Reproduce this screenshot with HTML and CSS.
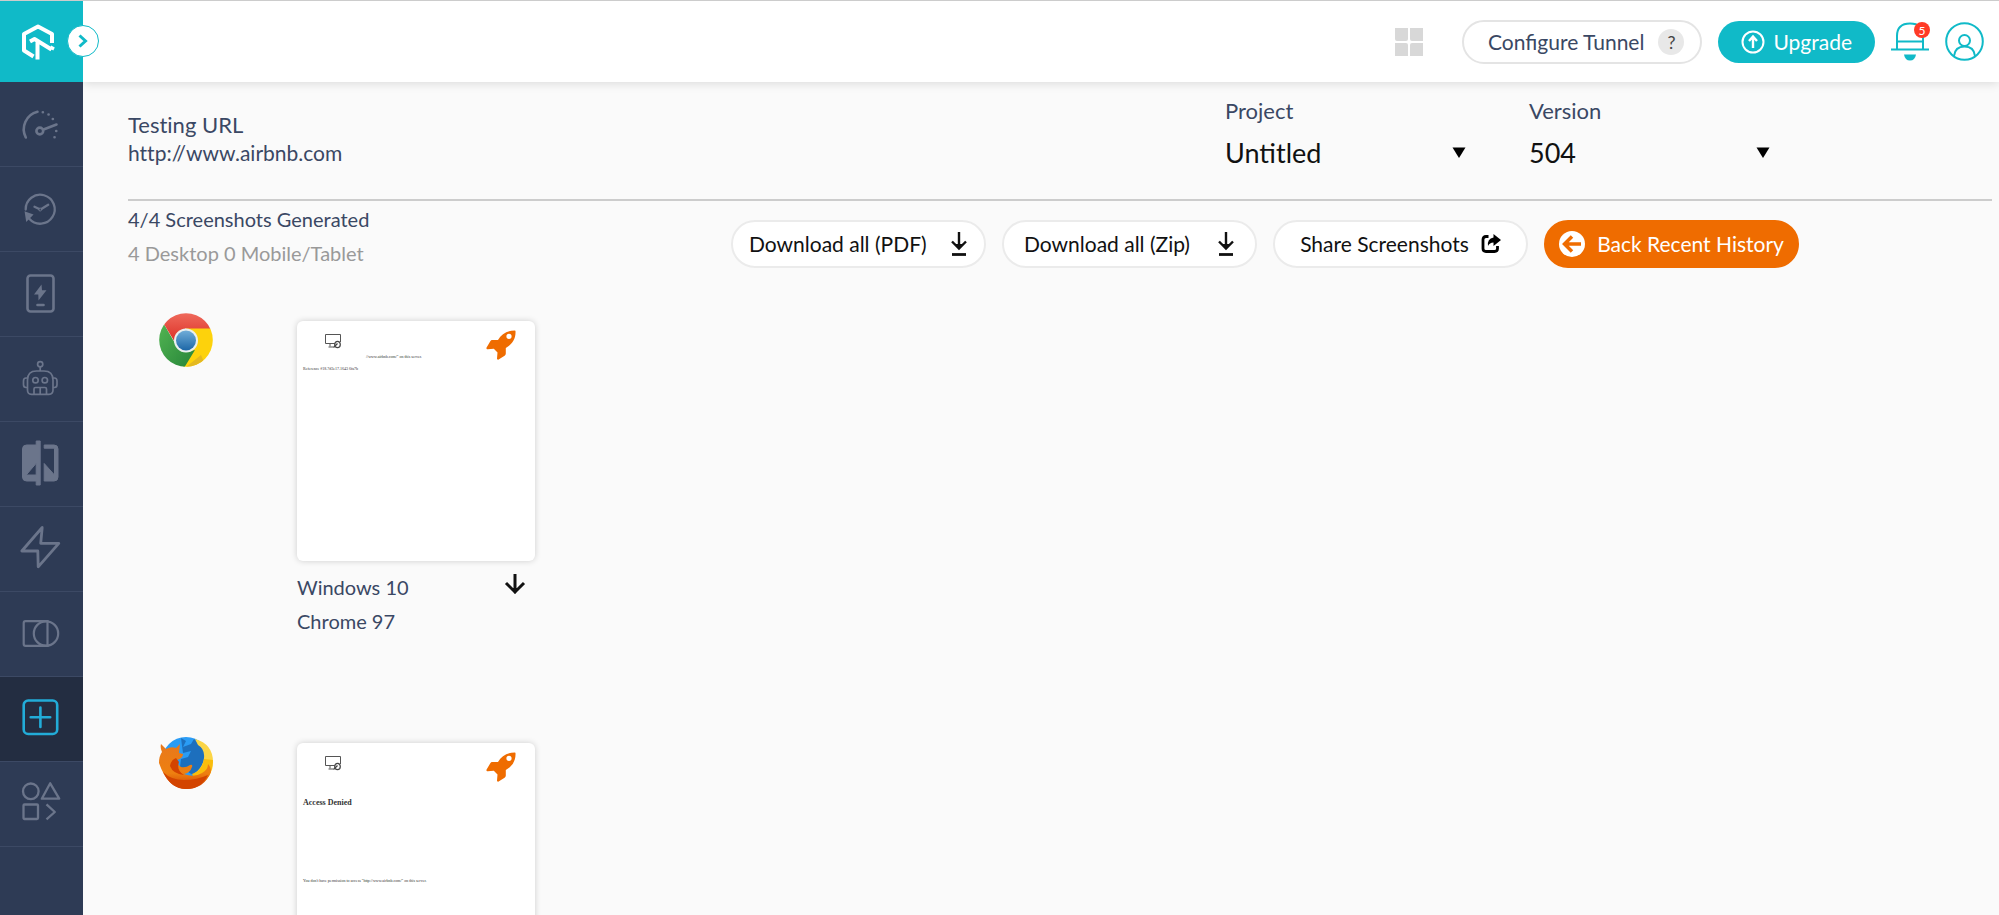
FILE: index.html
```
<!DOCTYPE html>
<html lang="en">
<head>
    <meta charset="UTF-8">
    <meta name="viewport" content="width=device-width, initial-scale=1.0">
    <title>Screenshot Results</title>
    <link rel="stylesheet" href="styles.css">
</head>
<body>
    <svg class="symbols" aria-hidden="true">
        <symbol id="icon-download" viewBox="0 0 18 26">
            <path d="M9 1v17M2 10.5l7 7 7-7" fill="none" stroke="currentColor" stroke-width="2.4"/>
            <path d="M4.5 13h9L9 18z" fill="currentColor"/>
            <path d="M2 23.5h14" stroke="currentColor" stroke-width="2.8"/>
        </symbol>
        <symbol id="icon-monitor" viewBox="0 0 18 16">
            <path d="M11 10.500H1.500V1.500h15V9M6 10.500v3M4.500 14h5" fill="none" stroke="#555" stroke-width="1"/>
            <ellipse cx="13.500" cy="11.500" rx="2.800" ry="3.200" fill="#fff" stroke="#444" stroke-width="1.200"/>
            <path d="M9.500 14.500l4-4" stroke="#444" stroke-width="1.200"/>
        </symbol>
        <symbol id="icon-rocket" viewBox="0 0 30 30">
            <path fill="#ef6c00" fill-rule="evenodd" d="M29 .5C21 .5 15.500 4 12 10H6.500c-1 0-1.700.5-2.200 1.300L.6 17.600c-.5 1 .2 1.700 1.200 1.600l6-.4L11.500 22.500 11 28.500c0 1 .8 1.500 1.600 1l6-3.800c.8-.5 1.200-1.200 1.200-2.200V18C26 14.500 30 9 29.500 1zM23 3.700a2.600 2.600 0 1 1 0 5.200 2.600 2.600 0 0 1 0-5.200z"/>
        </symbol>
        <symbol id="icon-arrow-down" viewBox="0 0 22 22">
            <path d="M11 0v17M2 9l9 9 9-9" fill="none" stroke="currentColor" stroke-width="3"/>
            <path d="M7 14h8l-4 6z" fill="currentColor"/>
        </symbol>
    </svg>

    <aside class="sidebar">
        <a class="logo" href="#" aria-label="Home">
            <svg width="34" height="38" viewBox="0 0 34 38" fill="none" stroke="#fff" stroke-width="4" stroke-linejoin="round">
                <path d="M31 20v-9L17 3.500 3 11v16.500l9.500 6"/>
                <path d="M9 18.500l4.500-2.500 17 10.500M30.500 26.500l1.500-3M16.500 18v18.500"/>
            </svg>
        </a>
        <button class="toggle" type="button" aria-label="Expand menu">
            <svg width="12" height="14" viewBox="0 0 12 14" fill="none" stroke="#10bac8" stroke-width="3"><path d="M2.500 1.500L8.500 7l-6 5.500"/></svg>
        </button>
        <nav class="menu">
            <a href="#" aria-label="Dashboard">
                <svg viewBox="0 0 40 40" stroke-width="2.600" stroke-linecap="round">
                    <path d="M4.800 33.500A18 18 0 0 1 16.500 7.800"/>
                    <circle cx="18.800" cy="27" r="3.400"/>
                    <path d="M22.500 25.500l13-5M21.800 8.300h.1M27.500 10.500h.1M31.800 15h.1M35.200 27h.1M33.500 33.300h.1"/>
                </svg>
            </a>
            <a href="#" aria-label="Real time testing">
                <svg viewBox="0 0 40 40" stroke-width="2.300" stroke-linecap="round">
                    <path d="M4.700 20.500A14.500 14.500 0 1 1 8.300 29.800"/>
                    <path d="M5 24l5.500 2L6 30.500z" fill="currentColor"/>
                    <path d="M13.500 17.800l4.200 2M20.700 19.800l6.500-4"/>
                    <circle cx="19.200" cy="20.500" r="1.500" stroke-width="1"/>
                </svg>
            </a>
            <a href="#" aria-label="App testing">
                <svg viewBox="0 0 40 40" stroke-width="2.600">
                    <rect x="6.500" y="1.500" width="26" height="36" rx="3"/>
                    <path d="M20.500 10.500l-7.500 10h4.300L17.500 26.500l8-10.300h-4.500z" fill="currentColor" stroke="none"/>
                    <path d="M16.500 31h6" stroke-linecap="round"/>
                </svg>
            </a>
            <a href="#" aria-label="Automation">
                <svg viewBox="0 0 40 40" stroke-width="1.700">
                    <circle cx="19.200" cy="5.300" r="2.600"/>
                    <path d="M19.200 8v4M6.500 31V21q0-9 9-9h7.500q9 0 9 9v10q0 4.300-4 4.300H10.500q-4 0-4-4.300zM6.500 19H5q-2.500 0-2.500 3v3.500q0 3 2.500 3h1.500M32 19h1.500q2.500 0 2.500 3v3.500q0 3-2.500 3H32"/>
                    <circle cx="14.500" cy="21.200" r="2.700"/>
                    <circle cx="23.800" cy="21.200" r="2.700"/>
                    <path d="M13 35v-5q0-1.500 1.500-1.500h9.500q1.500 0 1.500 1.500v5M19.200 28.500V35"/>
                </svg>
            </a>
            <a href="#" aria-label="Visual comparison">
                <svg viewBox="0 0 40 40" stroke="none">
                    <path fill="currentColor" fill-rule="evenodd" d="M5.500 1h9.700v-4h4v44h-4v-4H5.500a4 4 0 0 1-4-4V5a4 4 0 0 1 4-4zM5.200 31h10V19.300z"/>
                    <path fill="currentColor" d="M23.200 1H33a4 4 0 0 1 4 4v28a4 4 0 0 1-4 4h-9.800V19.500L33.500 31V4.200H23.200z"/>
                </svg>
            </a>
            <a href="#" aria-label="Smart testing">
                <svg viewBox="0 0 40 40" stroke-width="2.800" stroke-linejoin="round">
                    <path d="M21.200-1.500L.8 22h16l.4 15.800 20.600-23.500H19.700z"/>
                </svg>
            </a>
            <a href="#" aria-label="Responsive testing">
                <svg viewBox="0 0 40 40" stroke-width="2.200">
                    <path d="M26.500 7.200H4.500q-1.800 0-1.800 1.800v21q0 1.800 1.800 1.800h22z"/>
                    <circle cx="25" cy="19.500" r="12.200"/>
                </svg>
            </a>
            <a href="#" class="active" aria-label="Screenshots">
                <svg viewBox="0 0 40 40" stroke-width="2.600" stroke-linecap="round">
                    <rect x="2.700" y="1.500" width="33.500" height="33.500" rx="4.500"/>
                    <path d="M19.400 8.500v19.500M9.700 18.200h19.500"/>
                </svg>
            </a>
            <a href="#" aria-label="Integrations">
                <svg viewBox="0 0 40 40" stroke-width="2.300" stroke-linejoin="round">
                    <circle cx="9.800" cy="7.300" r="7.800"/>
                    <path d="M29.200-.7l-8.400 15.400h17.400zM25.500 20.300l8.300 7.700-8.300 7.400"/>
                    <rect x="2.500" y="20.500" width="14.500" height="14.500" rx="1"/>
                </svg>
            </a>
        </nav>
    </aside>

    <div class="page">
        <header class="topbar">
            <button class="apps" type="button" aria-label="Apps">
                <svg width="28" height="28" viewBox="0 0 28 28" fill="#d8d8d8">
                    <path d="M0 0h13v11q0 2-2 2H2q-2 0-2-2zM15 0h13v13H17q-2 0-2-2zM0 15h11q2 0 2 2v11H0zM17 15h11v13H15V17q0-2 2-2z"/>
                </svg>
            </button>
            <button class="tunnel" type="button">Configure Tunnel <span class="help">?</span></button>
            <button class="upgrade" type="button">
                <svg width="24" height="24" viewBox="0 0 24 24" fill="none" stroke="#fff" stroke-width="2">
                    <circle cx="12" cy="12" r="10.500"/>
                    <path d="M12 18V7M8 11l4-4.500 4 4.500" stroke-width="2.400"/>
                </svg>
                Upgrade
            </button>
            <button class="bell" type="button" aria-label="Notifications">
                <svg width="38" height="39" viewBox="0 0 38 39" fill="none" stroke="#10bac8" stroke-width="2">
                    <path d="M0 27.500h38M6 27V14Q6 1.500 19 1.500T32 14v13M6 19.500h26"/>
                    <path d="M13 32.500h12q-1 6-6 6t-6-6z" fill="#10bac8" stroke="none"/>
                </svg>
                <span class="count">5</span>
            </button>
            <button class="account" type="button" aria-label="Account">
                <svg width="39" height="39" viewBox="0 0 39 39" fill="none" stroke="#10bac8" stroke-width="2">
                    <circle cx="19.500" cy="19.500" r="18.300"/>
                    <circle cx="19.500" cy="18.500" r="5.500"/>
                    <path d="M9 34q1-9.500 10.500-9.500T30 34"/>
                </svg>
            </button>
        </header>

        <main class="content">
            <section class="details">
                <div class="url">
                    <h1>Testing URL</h1>
                    <p>http://www.airbnb.com</p>
                </div>
                <div class="fields">
                    <div class="field">
                        <label for="project">Project</label>
                        <div class="select-wrap">
                            <select id="project"><option>Untitled</option></select>
                            <svg width="14" height="11" viewBox="0 0 14 11"><path d="M.5.500h13L7 11z"/></svg>
                        </div>
                    </div>
                    <div class="field">
                        <label for="version">Version</label>
                        <div class="select-wrap">
                            <select id="version"><option>504</option></select>
                            <svg width="14" height="11" viewBox="0 0 14 11"><path d="M.5.500h13L7 11z"/></svg>
                        </div>
                    </div>
                </div>
            </section>

            <section class="summary">
                <div class="counts">
                    <h2>4/4 Screenshots Generated</h2>
                    <p>4 Desktop 0 Mobile/Tablet</p>
                </div>
                <div class="actions">
                    <button class="action spread" type="button">Download all (PDF) <svg width="18" height="26"><use href="#icon-download"/></svg></button>
                    <button class="action spread zip" type="button">Download all (Zip) <svg width="18" height="26"><use href="#icon-download"/></svg></button>
                    <button class="action" type="button">
                        Share Screenshots
                        <svg width="20" height="20" viewBox="0 0 20 20">
                            <path d="M7.500 2.500H5Q2 2.500 2 5.500v9q0 3 3 3h8.500q3 0 3-3V12" fill="none" stroke="#000" stroke-width="2.800"/>
                            <path d="M12.500 0L20 6l-7.500 6V8.500q-4 0-5.500 3.500Q6 4.500 12.500 3.500z"/>
                        </svg>
                    </button>
                    <button class="action back" type="button">
                        <svg width="26" height="26" viewBox="0 0 26 26">
                            <circle cx="13" cy="13" r="13" fill="#fff"/>
                            <path d="M22 13H6.500M13 5.500L5.500 13l7.500 7.500" fill="none" stroke="#ef6c00" stroke-width="3.500"/>
                        </svg>
                        Back Recent History
                    </button>
                </div>
            </section>

            <section class="result">
                <svg class="browser" width="54" height="54" viewBox="0 0 54 54" role="img" aria-label="Chrome">
                    <defs>
                        <linearGradient id="red" x1="0" y1="0" x2="0" y2="1"><stop offset="0" stop-color="#ef6a5c"/><stop offset="1" stop-color="#dc3026"/></linearGradient>
                        <linearGradient id="blue" x1="0" y1="0" x2="0" y2="1"><stop offset="0" stop-color="#70add8"/><stop offset="1" stop-color="#1d67a7"/></linearGradient>
                        <linearGradient id="green" x1="0" y1="0" x2="1" y2="1"><stop offset="0" stop-color="#53b553"/><stop offset="1" stop-color="#258438"/></linearGradient>
                        <clipPath id="disc"><circle cx="27" cy="27" r="26.800"/></clipPath>
                    </defs>
                    <g clip-path="url(#disc)">
                        <path fill="#fdd20c" d="M27 15h27v39H24z"/>
                        <path fill="#e4b91f" d="M42 42L27 54h20z"/>
                        <path fill="url(#green)" d="M0 9l5.500 3L17 32l10 7 9-2-11 18H0z"/>
                        <path fill="url(#red)" d="M0 0h54v15.500H27q-10 2-11.500 13L5.500 12z"/>
                    </g>
                    <circle cx="27" cy="27.500" r="12" fill="#eaf0ef"/>
                    <circle cx="27" cy="27.500" r="10" fill="url(#blue)"/>
                </svg>
                <div class="shot">
                    <a class="thumb" href="#">
                        <svg class="device" width="18" height="16"><use href="#icon-monitor"/></svg>
                        <svg class="rocket" width="30" height="30"><use href="#icon-rocket"/></svg>
                        <span class="tiny shift">//www.airbnb.com/" on this server.</span>
                        <span class="tiny">Reference #18.7d3e17.1643 6fa7b</span>
                    </a>
                    <div class="caption">
                        <p>Windows 10<br>Chrome 97</p>
                        <button type="button" aria-label="Download"><svg width="22" height="22"><use href="#icon-arrow-down"/></svg></button>
                    </div>
                </div>
            </section>

            <section class="result">
                <svg class="browser" width="54" height="54" viewBox="0 0 54 54" role="img" aria-label="Firefox">
                    <defs>
                        <linearGradient id="fox" x1="0" y1="0" x2="0" y2="1"><stop offset="0" stop-color="#e8781c"/><stop offset=".65" stop-color="#ee8010"/><stop offset="1" stop-color="#cf3c00"/></linearGradient>
                    </defs>
                    <circle cx="27" cy="26" r="24" fill="#2a9cf5"/>
                    <path fill="#1d6fbd" d="M22 3l5 3-3 6 8-3 3-5 9 8 2 12-3 13-9 3-13-8 1-8 7-2 3-6-8 2z"/>
                    <path fill="#fbd546" d="M36 4q18 5 18 23 0 14-12 22l-6-11q8-6 9-15t-6-13z"/>
                    <path fill="#f9bd0c" d="M54 25q0 17-15 26l-6-12q10-3 12-15z"/>
                    <path fill="url(#fox)" d="M2 9l5 5q5-3 10-1l4-4-1 9 4 1q0 4-6 6 0 5 4 7 5 1 9-2 3-1 2 2-2 6-8 7 10 4 18-1 6-3 6-9 3 3 3 8-7 17-25 17T0 28q0-7 3-11-2-4-1-8z"/>
                    <path fill="#d34400" d="M4 37q8 8 21 8t24-5q-7 14-22 14T4 37zM17 23q-5 2-6 8 3 8 14 9-8-5-5-13z"/>
                </svg>
                <div class="shot">
                    <a class="thumb" href="#">
                        <svg class="device" width="18" height="16"><use href="#icon-monitor"/></svg>
                        <svg class="rocket" width="30" height="30"><use href="#icon-rocket"/></svg>
                        <strong class="denied">Access Denied</strong>
                        <span class="reason">You don't have permission to access "http://www.airbnb.com/" on this server.</span>
                    </a>
                </div>
            </section>
        </main>
    </div>
</body>
</html>
```
FILE: styles.css
```
:root {
    --teal: #10bac8;
    --navy: #2e3b55;
    --orange: #ef6c00;
    --text: #3a4864;
    --border: #e4e4e4;
}

* {
    box-sizing: border-box;
}

body {
    margin: 0;
    height: 100vh;
    display: flex;
    overflow: hidden;
    border-top: 1px solid #ccc;
    background-color: #fafafa;
    color: var(--text);
    font-family: Lato, "Liberation Sans", sans-serif;
    font-size: 21px;
    line-height: 28px;
}

h1,
h2,
p {
    margin: 0;
    font-size: inherit;
    font-weight: 400;
}

button {
    padding: 0;
    border: none;
    background: none;
    color: inherit;
    font: inherit;
    cursor: pointer;
}

svg {
    display: block;
    flex: none;
}

.symbols {
    position: absolute;
    width: 0;
    height: 0;
}

/* Sidebar */
.sidebar {
    position: relative;
    z-index: 2;
    flex: none;
    width: 83px;
    background-color: var(--navy);
}

.logo {
    display: flex;
    align-items: center;
    height: 81px;
    padding-left: 21px;
    background-color: var(--teal);
}

.toggle {
    position: absolute;
    top: 24px;
    right: -16px;
    width: 32px;
    height: 32px;
    display: flex;
    align-items: center;
    justify-content: center;
    border: 1px solid var(--teal);
    border-radius: 50%;
    background-color: #fff;
}

.menu a {
    display: flex;
    align-items: center;
    justify-content: center;
    height: 85px;
    padding-right: 2px;
    border-bottom: 1px solid #3c4964;
    color: #6b758b;
}

.menu a.active {
    background-color: #232d41;
    color: #22acd8;
}

.menu svg {
    width: 40px;
    height: 40px;
    overflow: visible;
    fill: none;
    stroke: currentColor;
}

/* Top bar */
.page {
    flex: 1;
    min-width: 0;
}

.topbar {
    position: relative;
    display: flex;
    align-items: center;
    justify-content: flex-end;
    height: 81px;
    padding-right: 15px;
    background-color: #fff;
    box-shadow: 0 1px 10px rgba(0, 0, 0, 0.14);
}

.apps {
    margin-right: 39px;
}

.tunnel {
    display: flex;
    align-items: center;
    gap: 14px;
    height: 44px;
    margin-right: 16px;
    padding: 0 16px 0 24px;
    border: 2px solid var(--border);
    border-radius: 22px;
}

.help {
    width: 26px;
    height: 26px;
    border-radius: 50%;
    background-color: #e8e8e8;
    color: #444;
    font-size: 18px;
    line-height: 26px;
}

.upgrade {
    display: flex;
    align-items: center;
    gap: 8px;
    height: 42px;
    margin-right: 16px;
    padding: 0 23px;
    border-radius: 21px;
    background-color: var(--teal);
    color: #fff;
}

.bell {
    position: relative;
    margin-right: 16px;
}

.count {
    position: absolute;
    top: 0;
    right: -1px;
    width: 16px;
    height: 16px;
    border-radius: 50%;
    background-color: #ff3b26;
    color: #fff;
    font-size: 12px;
    line-height: 18px;
}

/* Content */
.content {
    padding: 0 7px 0 45px;
    font-variant-ligatures: none;
}

.details {
    display: flex;
    justify-content: space-between;
    height: 119px;
    padding: 15px 222px 0 0;
    border-bottom: 2px solid #ccc;
}

.url {
    padding-top: 14px;
}

.url h1,
.field label {
    font-size: 22px;
}

.fields {
    display: flex;
    gap: 63px;
}

.field {
    width: 241px;
}

.field label {
    display: block;
}

.select-wrap {
    display: grid;
    align-items: center;
    margin-top: 9px;
}

.select-wrap select,
.select-wrap svg {
    grid-area: 1 / 1;
}

.select-wrap svg {
    justify-self: end;
    pointer-events: none;
}

.select-wrap select {
    appearance: none;
    width: 100%;
    height: 36px;
    padding: 0;
    border: none;
    background: none;
    color: #111;
    font-family: inherit;
    font-size: 27px;
}

.summary {
    display: flex;
    justify-content: space-between;
    padding-right: 193px;
}

.counts {
    padding-top: 4px;
    font-size: 20px;
}

.counts p {
    margin-top: 6px;
    color: #999;
}

.actions {
    display: flex;
    gap: 16px;
    padding-top: 19px;
}

.action {
    display: flex;
    align-items: center;
    justify-content: center;
    gap: 12px;
    width: 255px;
    height: 48px;
    border: 2px solid #ebebeb;
    border-radius: 24px;
    background-color: #fff;
    color: #111;
}

.action.spread {
    justify-content: space-between;
    padding: 0 16px;
}

.action.zip {
    padding: 0 20px;
}

.action.back {
    border-color: var(--orange);
    background-color: var(--orange);
    color: #fff;
}

/* Results */
.result {
    display: flex;
    height: 422px;
    padding: 45px 0 0 31px;
}

.browser {
    margin-right: 84px;
}

.shot {
    width: 238px;
    padding-top: 8px;
}

.thumb {
    position: relative;
    display: block;
    height: 240px;
    padding: 30px 6px 0;
    border-radius: 6px;
    background-color: #fff;
    box-shadow: 0 0 6px rgba(0, 0, 0, 0.18);
    color: #333;
    font-family: "Liberation Serif", serif;
    text-decoration: none;
}

.device {
    position: absolute;
    top: 12px;
    left: 27px;
}

.rocket {
    position: absolute;
    top: 9px;
    right: 19px;
}

.tiny {
    display: block;
    font-size: 4px;
    line-height: 12px;
}

.tiny.shift {
    padding-left: 63px;
}

.denied {
    display: block;
    margin-top: 18px;
    font-size: 8px;
    line-height: 24px;
}

.reason {
    display: block;
    margin-top: 54px;
    font-size: 4px;
    line-height: 24px;
    white-space: nowrap;
}

.caption {
    display: flex;
    justify-content: space-between;
    align-items: flex-start;
    padding: 9px 9px 0 0;
    font-size: 20px;
    line-height: 34px;
}

.caption button {
    padding-top: 4px;
    color: #111;
}
```
